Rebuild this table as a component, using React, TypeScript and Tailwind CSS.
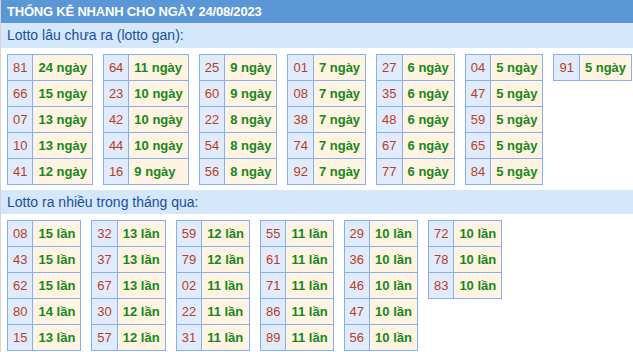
import React from "react";

type Item = [string, string];

const ganGroups: Item[][] = [
    [["81", "24 ngày"], ["66", "15 ngày"], ["07", "13 ngày"], ["10", "13 ngày"], ["41", "12 ngày"]],
    [["64", "11 ngày"], ["23", "10 ngày"], ["42", "10 ngày"], ["44", "10 ngày"], ["16", "9 ngày"]],
    [["25", "9 ngày"], ["60", "9 ngày"], ["22", "8 ngày"], ["54", "8 ngày"], ["56", "8 ngày"]],
    [["01", "7 ngày"], ["08", "7 ngày"], ["38", "7 ngày"], ["74", "7 ngày"], ["92", "7 ngày"]],
    [["27", "6 ngày"], ["35", "6 ngày"], ["48", "6 ngày"], ["67", "6 ngày"], ["77", "6 ngày"]],
    [["04", "5 ngày"], ["47", "5 ngày"], ["59", "5 ngày"], ["65", "5 ngày"], ["84", "5 ngày"]],
    [["91", "5 ngày"]]
];

const nhieuGroups: Item[][] = [
    [["08", "15 lần"], ["43", "15 lần"], ["62", "15 lần"], ["80", "14 lần"], ["15", "13 lần"]],
    [["32", "13 lần"], ["37", "13 lần"], ["67", "13 lần"], ["30", "12 lần"], ["57", "12 lần"]],
    [["59", "12 lần"], ["79", "12 lần"], ["02", "11 lần"], ["22", "11 lần"], ["31", "11 lần"]],
    [["55", "11 lần"], ["61", "11 lần"], ["71", "11 lần"], ["86", "11 lần"], ["89", "11 lần"]],
    [["29", "10 lần"], ["36", "10 lần"], ["46", "10 lần"], ["47", "10 lần"], ["56", "10 lần"]],
    [["72", "10 lần"], ["78", "10 lần"], ["83", "10 lần"]]
];

const Block = ({ rows }: { rows: Item[] }) => (
    <div className="grid grid-cols-[auto_auto] w-fit border-t border-l border-[#86aff2]">
        {rows.map(([num, val]) => (
            <React.Fragment key={num + val}>
                <div className="px-[5px] py-[5px] leading-[15px] text-[13px] text-[#bb3d20] bg-[#e0ecfd] border-r border-b border-[#86aff2]">
                    {num}
                </div>
                <div className="px-[5px] py-[5px] leading-[15px] text-[13px] font-bold text-[#17881b] bg-[#fff3e1] border-r border-b border-[#86aff2]">
                    {val}
                </div>
            </React.Fragment>
        ))}
    </div>
);

export default function App() {
    return (
        <div
            className="w-[633px] h-[352px] overflow-hidden bg-white border-l border-[#d4d4d4]"
            style={{ fontFamily: '"Liberation Sans", Arial, sans-serif' }}
        >
            <div className="h-[23px] flex items-center px-[6px] bg-[#5b96d7] text-white font-bold text-[13px] tracking-[-0.2px]">
                THỐNG KÊ NHANH CHO NGÀY 24/08/2023
            </div>
            <div className="h-[25px] flex items-center px-[6px] bg-[#d4e7fb] text-[#1c4f9e] text-[14px]">
                Lotto lâu chưa ra (lotto gan):
            </div>
            <div className="flex items-start gap-[10px] pl-[6px] pt-[6px]">
                {ganGroups.map((g, i) => (
                    <Block key={i} rows={g} />
                ))}
            </div>
            <div className="mt-[5px] h-[24px] flex items-center px-[6px] bg-[#d4e7fb] text-[#1c4f9e] text-[14px]">
                Lotto ra nhiều trong tháng qua:
            </div>
            <div className="flex items-start gap-[10px] pl-[6px] pt-[6px]">
                {nhieuGroups.map((g, i) => (
                    <Block key={i} rows={g} />
                ))}
            </div>
        </div>
    );
}
